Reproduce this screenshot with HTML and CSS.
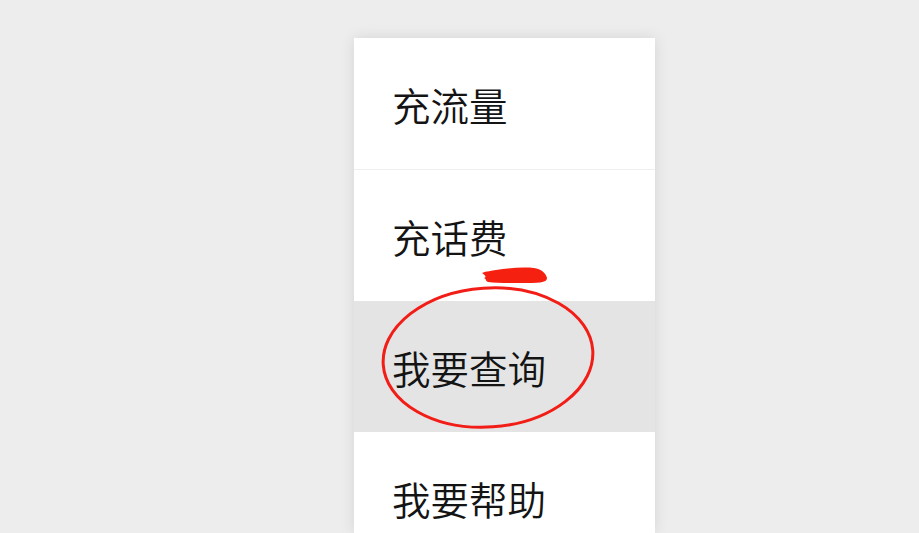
FILE: index.html
```html
<!DOCTYPE html>
<html lang="zh">
<head>
<meta charset="utf-8">
<link rel="stylesheet" href="styles.css">
</head>
<body>
<div class="menu">
  <div class="item divided">充流量</div>
  <div class="item">充话费</div>
  <div class="item active">我要查询</div>
  <div class="item">我要帮助</div>
</div>
<svg class="marks" width="919" height="533" viewBox="0 0 919 533">
  <path d="M482 273 C486 271 492 271 496 270 C508 268 522 267 534 268 C541 269 546 273 547 278 C547 283 538 283 520 283 C506 283 496 283 488 282 C485 281 487 279 484 278 C487 277 485 275 482 273 Z" fill="#f5200f"/>
  <ellipse cx="488" cy="357.5" rx="105" ry="69.5" transform="rotate(-4 488 357.5)" fill="none" stroke="#f21d16" stroke-width="3"/>
</svg>
</body>
</html>
```
FILE: styles.css
```css
html, body {
  margin: 0;
  padding: 0;
}
body {
  background: #ededed;
  width: 919px;
  height: 533px;
  overflow: hidden;
  position: relative;
  font-family: "Noto Sans CJK SC", "Noto Sans", sans-serif;
}
.menu {
  margin: 38px 0 0 354px;
  width: 301px;
  height: 495px;
  overflow: hidden;
  background: #ffffff;
  box-shadow: 0 0 14px rgba(0, 0, 0, 0.1);
}
.item {
  height: 131px;
  display: flex;
  align-items: center;
  padding-left: 38px;
  font-size: 38.5px;
  font-weight: 350;
  color: #141414;
}
.item.divided {
  border-bottom: 1px solid #efefef;
}
.item.active {
  background: #e4e4e4;
}
.marks {
  position: absolute;
  left: 0;
  top: 0;
  pointer-events: none;
}
```
